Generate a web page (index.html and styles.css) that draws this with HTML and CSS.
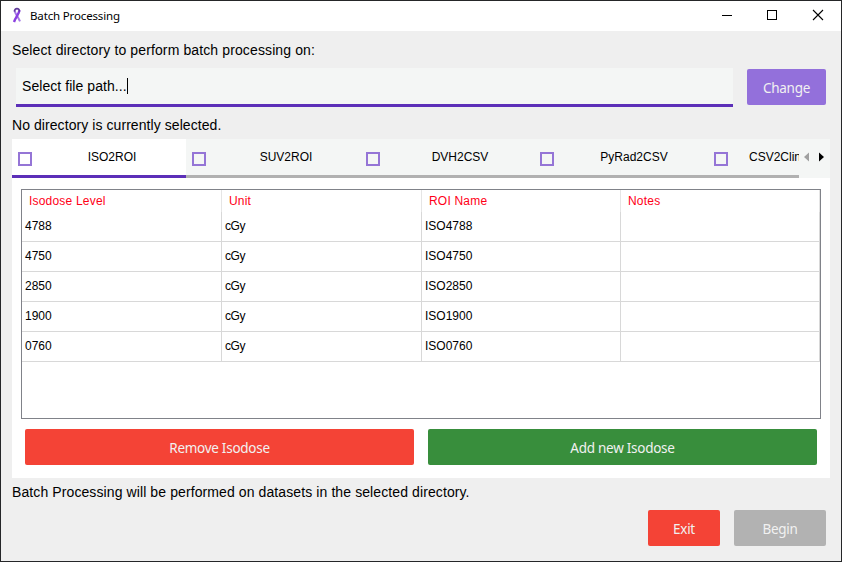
FILE: index.html
```
<!DOCTYPE html>
<html lang="en">
<head>
<meta charset="utf-8">
<title>Batch Processing</title>
<link rel="stylesheet" href="styles.css">
</head>
<body>
<div class="window">
  <header class="titlebar">
    <svg class="logo" width="10" height="16" viewBox="0 0 10 16" fill="none">
      <path d="M2.600 3.200C2.600 6 6 9.600 8 14.300" stroke="#a77be6" stroke-width="2"/>
      <path d="M7.400 3.200C7.400 6.400 4 9.600 2 15" stroke="#8a3fe0" stroke-width="2.400"/>
      <path d="M2.600 4.600C2 .6 8 .6 7.400 4.600" stroke="#5f3a9a" stroke-width="1.600"/>
    </svg>
    <h1 class="title">Batch Processing</h1>
    <svg class="controls" width="104" height="12" viewBox="0 0 104 12" fill="none" stroke="#000" shape-rendering="crispEdges">
      <path d="M1 6.500H11"/>
      <rect x="46.500" y="1.500" width="9" height="9"/>
      <path d="M92 1L102 11M102 1L92 11" shape-rendering="auto" stroke-width="1.100"/>
    </svg>
  </header>
  <main class="content">
    <p class="label prompt">Select directory to perform batch processing on:</p>
    <div class="path-row">
      <div class="path-input"><span class="path-text">Select file path...</span><i class="caret"></i></div>
      <button class="btn btn-change">Change</button>
    </div>
    <p class="label status">No directory is currently selected.</p>
    <nav class="tabbar">
      <div class="tabs">
        <div class="tab active"><i class="check"></i><span class="tab-name">ISO2ROI</span></div>
        <div class="tab"><i class="check"></i><span class="tab-name">SUV2ROI</span></div>
        <div class="tab"><i class="check"></i><span class="tab-name">DVH2CSV</span></div>
        <div class="tab"><i class="check"></i><span class="tab-name">PyRad2CSV</span></div>
        <div class="tab last"><i class="check"></i><span class="tab-name">CSV2ClinicalData</span></div>
      </div>
      <svg class="arrows" width="31" height="39" viewBox="0 0 31 39">
        <path d="M10 13.500V22.500L5 18Z" fill="#a0a0a0"/>
        <path d="M20 13.500V22.500L25 18Z" fill="#000"/>
      </svg>
    </nav>
    <section class="panel">
      <div class="table">
        <div class="row head"><span>Isodose Level</span><span>Unit</span><span>ROI Name</span><span>Notes</span></div>
        <div class="row"><span>4788</span><span class="unit">cGy</span><span>ISO4788</span><span></span></div>
        <div class="row"><span>4750</span><span class="unit">cGy</span><span>ISO4750</span><span></span></div>
        <div class="row"><span>2850</span><span class="unit">cGy</span><span>ISO2850</span><span></span></div>
        <div class="row"><span>1900</span><span class="unit">cGy</span><span>ISO1900</span><span></span></div>
        <div class="row"><span>0760</span><span class="unit">cGy</span><span>ISO0760</span><span></span></div>
      </div>
      <div class="actions">
        <button class="btn btn-red">Remove Isodose</button>
        <button class="btn btn-green">Add new Isodose</button>
      </div>
    </section>
    <p class="label note">Batch Processing will be performed on datasets in the selected directory.</p>
    <footer class="footer">
      <button class="btn btn-red btn-exit">Exit</button>
      <button class="btn btn-begin">Begin</button>
    </footer>
  </main>
</div>
</body>
</html>
```
FILE: styles.css
```
* { box-sizing: border-box; }
body { margin: 0; font-family: "Liberation Sans", Arial, sans-serif; color: #000; }
.window { width: 842px; height: 562px; border: 1px solid #252628; background: #efefef; overflow: hidden; }
.titlebar { height: 30px; background: #fff; display: flex; align-items: center; padding: 0 16px 0 11px; }
.title { margin: 0 auto 0 8px; font: 400 11.5px/16px "Noto Sans", sans-serif; white-space: nowrap; letter-spacing: -.15px; }
.logo, .controls { display: block; }
.logo { margin-top: -2px; }
.controls { margin-top: -2px; }
.content { padding: 9px 11px 0; }
.label { margin: 0; height: 20px; font-size: 14px; line-height: 20px; white-space: nowrap; letter-spacing: .1px; }
.prompt { letter-spacing: .12px; }
.path-row { display: flex; margin: 8px 4px 8px; gap: 14px; height: 39px; align-items: flex-start; }
.path-input { flex: 1; height: 39px; padding: 0 6px; display: flex; align-items: center; background: #f4f6f5; border-bottom: 3px solid #5c2fb8; font-size: 14px; letter-spacing: .06px; }
.caret { width: 1px; height: 16px; background: #000; }
.btn { height: 36px; padding: 2px 0 0; border: 0; border-radius: 2px; color: #f1f1f1; font: 13.5px/20px "Noto Sans", sans-serif; letter-spacing: -.27px; white-space: nowrap; }
.btn-change { width: 79px; margin-top: 1px; background: #9370db; }
.btn-red { background: #f44336; }
.btn-green { background: #388e3c; }
.btn-begin { width: 92px; background: #b2b2b2; }
.btn-exit { width: 72px; }
.status { margin-bottom: 4px; letter-spacing: .07px; }
.tabbar { display: flex; height: 39px; width: 818px; background: #f4f6f5; }
.tabs { display: flex; width: 787px; overflow: hidden; }
.tab { flex: 0 0 174px; height: 39px; padding-left: 6px; display: flex; border-bottom: 3px solid #b1b1b1; font-size: 12px; line-height: 36px; }
.active { background: #fff; border-color: #5c2fb8; }
.check { width: 14px; height: 14px; margin-top: 13px; border: 2px solid #9575d6; }
.tab-name { flex: 1; padding-left: 6px; text-align: center; white-space: nowrap; }
.last .tab-name { text-align: left; padding-left: 21px; }
.arrows { display: block; }
.panel { width: 818px; height: 300px; padding: 11px 9px 0; background: #fff; }
.table { height: 230px; border: 1px solid #808289; font-size: 12px; }
.row { display: grid; grid-template-columns: 200px 200px 199px 199px; height: 30px; line-height: 29px; }
.row span { border-right: 1px solid #d8d8d8; border-bottom: 1px solid #d8d8d8; padding-left: 3px; }
.head { height: 22px; line-height: 22px; color: #ff0017; }
.head span { border-bottom: 0; border-color: #e5e5e5; padding-left: 7px; letter-spacing: .2px; }
.row .unit { letter-spacing: -.4px; }
.actions { display: grid; grid-template-columns: 1fr 1fr; gap: 14px; padding: 10px 4px 0; }
.note { margin-top: 4px; }
.footer { display: flex; justify-content: flex-end; gap: 14px; padding: 8px 4px 0; }
```
